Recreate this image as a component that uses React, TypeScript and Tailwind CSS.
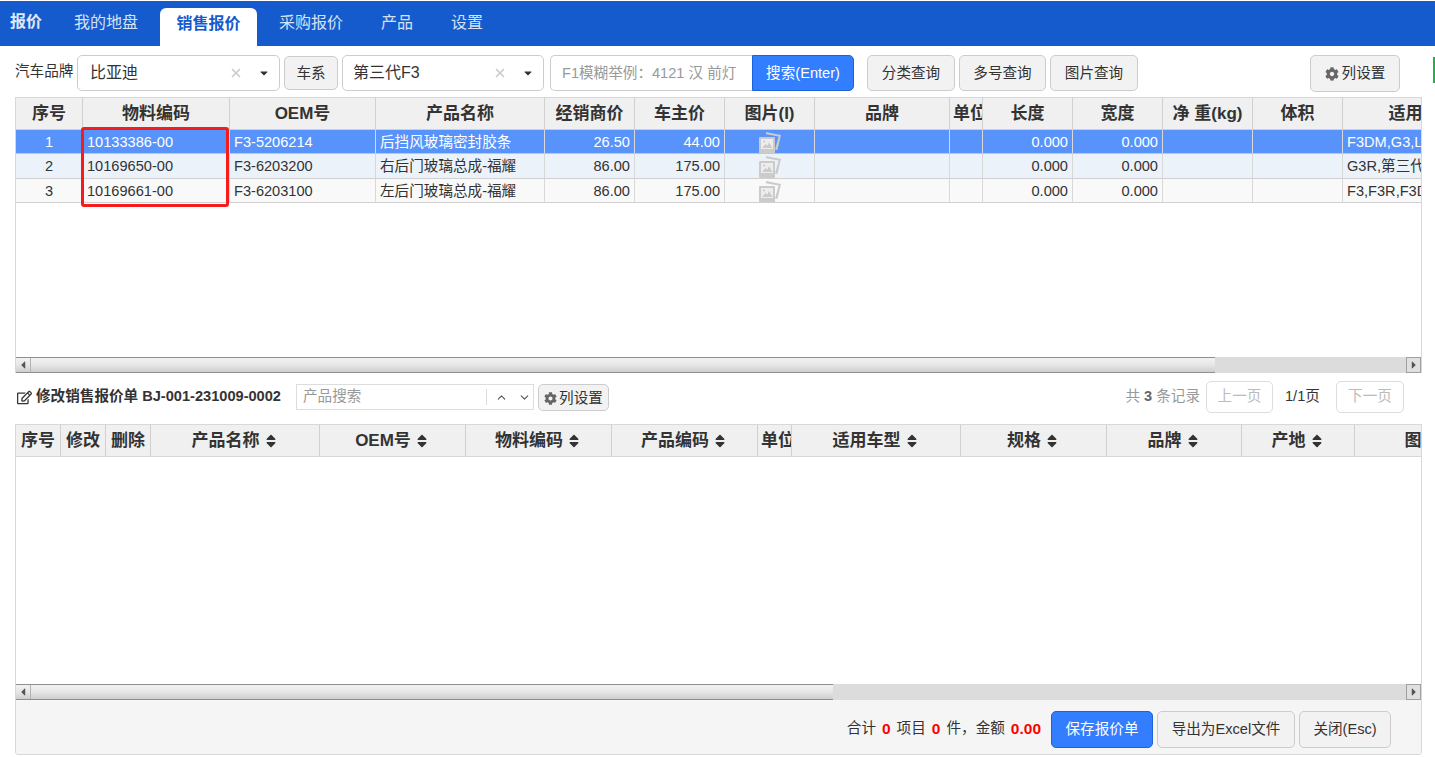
import { ChevronDown, ChevronUp, X } from "lucide-react";
import { FaCaretDown, FaCaretLeft, FaCaretRight, FaCog, FaRegEdit, FaSort } from "react-icons/fa";

const tabs = ["我的地盘", "销售报价", "采购报价", "产品", "设置"];

const topCols = [
  { title: "序号", width: "w-[67px]", cell: "justify-center", head: "justify-center" },
  { title: "物料编码", width: "w-[147px]", cell: "justify-start", head: "justify-center" },
  { title: "OEM号", width: "w-[146px]", cell: "justify-start", head: "justify-center" },
  { title: "产品名称", width: "w-[169px]", cell: "justify-start", head: "justify-center" },
  { title: "经销商价", width: "w-[90px]", cell: "justify-end", head: "justify-center" },
  { title: "车主价", width: "w-[90px]", cell: "justify-end", head: "justify-center" },
  { title: "图片(I)", width: "w-[90px]", cell: "justify-center", head: "justify-center" },
  { title: "品牌", width: "w-[135px]", cell: "justify-start", head: "justify-center" },
  { title: "单位", width: "w-[33px]", cell: "justify-start", head: "justify-start pl-[3px]" },
  { title: "长度", width: "w-[90px]", cell: "justify-end", head: "justify-center" },
  { title: "宽度", width: "w-[90px]", cell: "justify-end", head: "justify-center" },
  { title: "净 重(kg)", width: "w-[90px]", cell: "justify-start", head: "justify-center" },
  { title: "体积", width: "w-[90px]", cell: "justify-start", head: "justify-center" },
  { title: "适用车型", width: "w-[160px]", cell: "justify-start", head: "justify-center" },
];

const rows = [
  ["1", "10133386-00", "F3-5206214", "后挡风玻璃密封胶条", "26.50", "44.00", "", "", "", "0.000", "0.000", "", "", "F3DM,G3,L3,第三代"],
  ["2", "10169650-00", "F3-6203200", "右后门玻璃总成-福耀", "86.00", "175.00", "", "", "", "0.000", "0.000", "", "", "G3R,第三代F3"],
  ["3", "10169661-00", "F3-6203100", "左后门玻璃总成-福耀", "86.00", "175.00", "", "", "", "0.000", "0.000", "", "", "F3,F3R,F3DM"],
];

const rowStyles = [
  "h-[24px] bg-[#5793fb] text-white border-b border-[#c8c8c8]",
  "h-[25px] bg-[#ebf2fa] text-[#333] border-b border-[#d0d0d0]",
  "h-[24px] bg-[#f9f9f9] text-[#333] border-b border-[#d0d0d0]",
];

const bottomCols = [
  { title: "序号", width: "w-[45px]", sort: false, head: "justify-center" },
  { title: "修改", width: "w-[45px]", sort: false, head: "justify-center" },
  { title: "删除", width: "w-[45px]", sort: false, head: "justify-center" },
  { title: "产品名称", width: "w-[169px]", sort: true, head: "justify-center" },
  { title: "OEM号", width: "w-[146px]", sort: true, head: "justify-center" },
  { title: "物料编码", width: "w-[146px]", sort: true, head: "justify-center" },
  { title: "产品编码", width: "w-[146px]", sort: true, head: "justify-center" },
  { title: "单位", width: "w-[34px]", sort: false, head: "justify-start pl-[3px]" },
  { title: "适用车型", width: "w-[169px]", sort: true, head: "justify-center" },
  { title: "规格", width: "w-[146px]", sort: true, head: "justify-center" },
  { title: "品牌", width: "w-[135px]", sort: true, head: "justify-center" },
  { title: "产地", width: "w-[113px]", sort: true, head: "justify-center" },
  { title: "图片", width: "w-[134px]", sort: false, head: "justify-center" },
];

const PhotoIcon = () => (
  <svg width="24" height="24" viewBox="0 0 24 24" className="text-[#cbcbcb]">
    <path d="M8 2 L23 5 L19.5 20 L17 19.5 L20.6 6.6 L8 4.2 Z" fill="currentColor" />
    <rect x="1" y="7" width="16" height="17" rx="1" fill="currentColor" />
    <rect x="3" y="9" width="12" height="10" fill="#fff" fillOpacity="0.65" />
    <path d="M4 18 L7.5 14 L9.5 15.5 L11 12 L14.5 18 Z" fill="currentColor" />
    <circle cx="6" cy="11.5" r="1.1" fill="currentColor" />
  </svg>
);

const Select = ({ value, width }: { value: string; width: string }) => (
  <div className={`flex h-[36px] items-center rounded-[5px] border border-[#ccc] bg-white pr-[9px] text-[16px] text-[#333] ${width}`}>
    <span className="flex-1">{value}</span>
    <X size={14} strokeWidth={3} className="mr-[15px] text-[#ccc]" />
    <FaCaretDown size={12} className="text-[#333]" />
  </div>
);

const Btn = ({ className, children }: { className: string; children: React.ReactNode }) => (
  <button className={`flex items-center justify-center rounded-[5px] border border-[#ccc] bg-[#f2f2f2] text-[14.6px] text-[#333] ${className}`}>
    {children}
  </button>
);

const ScrollBar = ({ thumb }: { thumb: string }) => (
  <div className="flex h-[16px] shrink-0 bg-[#dcdcdc]">
    <div className={`flex items-stretch border-y border-[#8f8f8f] bg-[linear-gradient(#f2f2f2,#e6e6e6_50%,#cfcfcf)] ${thumb}`}>
      <div className="flex w-[15px] items-center justify-center border-r border-[#b5b5b5]">
        <FaCaretLeft size={12} className="text-[#555]" />
      </div>
    </div>
    <div className="ml-auto flex w-[15px] items-center justify-center border border-[#a0a0a0] bg-[#e0e0e0]">
      <FaCaretRight size={12} className="text-[#555]" />
    </div>
  </div>
);

export default function App() {
  return (
    <div className="relative h-[757px] w-[1435px] overflow-hidden bg-white pt-px font-['Liberation_Sans','Noto_Sans_CJK_SC',sans-serif] text-[14.6px] text-[#333]">
      {/* top nav */}
      <div className="flex h-[45px] items-end bg-[#155bcd] pl-[10px]">
        <span className="mb-[12px] w-[45px] text-[16px] font-bold text-[#dfe8f7]">报价</span>
        {tabs.map((tab) =>
          tab === "销售报价" ? (
            <div key={tab} className="mx-[3px] flex h-[38px] w-[97px] items-center justify-center rounded-t-[6px] bg-white pb-[6px] text-[16px] font-bold text-[#155bcd]">
              {tab}
            </div>
          ) : (
            <div key={tab} className="mb-[11px] px-[19px] text-[16px] text-[#d5e1f5]">
              {tab}
            </div>
          )
        )}
      </div>

      {/* search bar */}
      <div className="ml-[15px] mt-[9px] flex h-[36px] w-[1385px] items-center">
        <span className="mb-[2px] w-[62px] shrink-0 whitespace-nowrap text-[14.6px]">汽车品牌</span>
        <Select value="比亚迪" width="w-[203px] pl-[12px]" />
        <Btn className="ml-[4px] mr-[4px] h-[34px] w-[54px] pt-px">车系</Btn>
        <Select value="第三代F3" width="w-[202px] pl-[10px]" />
        <div className="ml-[6px] flex h-[36px] w-[202px] items-center whitespace-nowrap rounded-l-[5px] border border-r-0 border-[#ccc] pl-[11px] pt-px text-[#999]">
          F1模糊举例：4121 汉 前灯
        </div>
        <button className="h-[36px] w-[102px] rounded-r-[5px] border border-[#1d62d8] bg-[#337dff] pt-px text-white">搜索(Enter)</button>
        <Btn className="ml-[13px] h-[36px] w-[88px] pt-px">分类查询</Btn>
        <Btn className="ml-[4px] h-[36px] w-[87px] pt-px">多号查询</Btn>
        <Btn className="ml-[4px] h-[36px] w-[88px] pt-px">图片查询</Btn>
        <Btn className="ml-auto h-[37px] w-[90px] gap-[3px] pt-px">
          <FaCog size={14} className="text-[#666]" />
          列设置
        </Btn>
      </div>

      {/* product table */}
      <div className="ml-[15px] mt-[6px] flex h-[276px] w-[1407px] flex-col overflow-hidden border-x border-t border-[#d8d8d8]">
        <div className="flex-1 overflow-hidden">
          <div className="flex h-[32px] w-max border-b border-[#d0d0d0] bg-[#f0f0f0]">
            {topCols.map((col) => (
              <div key={col.title} className={`flex shrink-0 items-center overflow-hidden whitespace-nowrap border-r border-[#d0d0d0] text-[17px] font-bold ${col.width} ${col.head}`}>
                {col.title}
              </div>
            ))}
          </div>
          {rows.map((row, i) => (
            <div key={row[0]} className={`flex w-max ${rowStyles[i]}`}>
              {row.map((val, j) => (
                <div key={j} className={`flex shrink-0 items-center overflow-hidden whitespace-nowrap border-r border-[#d8d8d8] px-[4px] ${topCols[j].width} ${topCols[j].cell}`}>
                  {j === 6 ? <PhotoIcon /> : <span className="pt-[2px]">{val}</span>}
                </div>
              ))}
            </div>
          ))}
        </div>
        <ScrollBar thumb="w-[1199px]" />
      </div>

      {/* highlight drawn over the code column */}
      <div className="absolute left-[81px] top-[127px] h-[80px] w-[148px] rounded-[3px] border-[3px] border-[#f61c1c]" />

      {/* quote header */}
      <div className="ml-[15px] mt-[8px] flex h-[32px] w-[1389px] items-center">
        <FaRegEdit size={15} className="ml-[2px] mr-[4px] shrink-0 text-[#333]" />
        <span className="whitespace-nowrap font-bold">修改销售报价单 BJ-001-231009-0002</span>
        <div className="ml-[15px] flex h-[26px] w-[238px] shrink-0 items-center border border-[#ddd] pl-[6px] text-[#999]">
          <span className="flex-1">产品搜索</span>
          <span className="flex h-[16px] items-center gap-[10px] border-l border-[#ddd] pl-[8px] pr-[2px] text-[#555]">
            <ChevronUp size={13} />
            <ChevronDown size={13} />
          </span>
        </div>
        <Btn className="ml-[4px] h-[27px] w-[71px] shrink-0 gap-[2px] pt-[3px]">
          <FaCog size={13} className="text-[#666]" />
          列设置
        </Btn>
        <span className="ml-auto whitespace-nowrap text-[#999]">
          共 <b className="text-[#666]">3</b> 条记录
        </span>
        <span className="ml-[6px] flex h-[32px] w-[67px] shrink-0 items-center justify-center rounded-[5px] border border-[#ddd] text-[#bbb]">上一页</span>
        <span className="ml-[12px] mr-[16px] w-[35px] shrink-0 whitespace-nowrap">1/1页</span>
        <span className="flex h-[32px] w-[68px] shrink-0 items-center justify-center rounded-[5px] border border-[#ddd] text-[#bbb]">下一页</span>
      </div>

      {/* quote table */}
      <div className="ml-[15px] mt-[11px] flex h-[331px] w-[1407px] flex-col overflow-hidden rounded-b-[4px] border border-t-0 border-[#d8d8d8]">
        <div className="flex-1 overflow-hidden">
          <div className="flex h-[33px] w-max border-y border-[#d8d8d8] bg-[#f0f0f0]">
            {bottomCols.map((col) => (
              <div key={col.title} className={`flex shrink-0 items-center gap-[3px] overflow-hidden whitespace-nowrap border-r border-[#d0d0d0] text-[17px] font-bold ${col.width} ${col.head}`}>
                {col.title}
                {col.sort && <FaSort size={16} className="shrink-0 text-[#333]" />}
              </div>
            ))}
          </div>
        </div>
        <ScrollBar thumb="w-[817px]" />
        <div className="flex h-[54px] shrink-0 items-start justify-end bg-[#f5f5f5] pr-[30px] pt-[11px]">
          <div className="flex h-[35px] items-center">
            <span>合计</span>
            <b className="mx-[6px] text-[15.5px] text-[#f00]">0</b>
            <span>项目</span>
            <b className="mx-[6px] text-[15.5px] text-[#f00]">0</b>
            <span>件，金额</span>
            <b className="ml-[6px] text-[15.5px] text-[#f00]">0.00</b>
          </div>
          <button className="ml-[10px] h-[37px] w-[102px] rounded-[5px] border border-[#1d62d8] bg-[#337dff] text-white">保存报价单</button>
          <Btn className="ml-[4px] h-[37px] w-[138px]">导出为Excel文件</Btn>
          <Btn className="ml-[4px] h-[37px] w-[92px]">关闭(Esc)</Btn>
        </div>
      </div>

      {/* green sliver at the window edge */}
      <div className="absolute left-[1433px] top-[57px] h-[26px] w-[2px] bg-[#22b14c]" />
    </div>
  );
}
